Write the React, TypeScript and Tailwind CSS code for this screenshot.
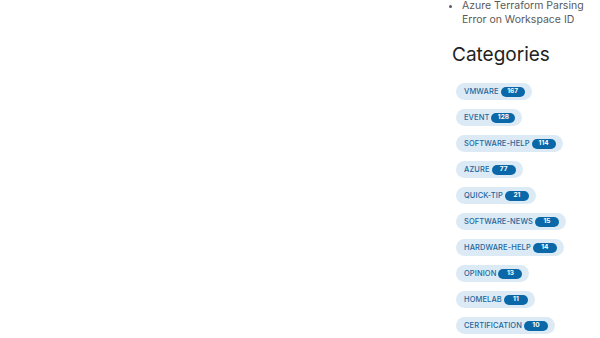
import React from "react";

const cats: [string, number][] = [
  ["VMWARE", 167],
  ["EVENT", 128],
  ["SOFTWARE-HELP", 114],
  ["AZURE", 77],
  ["QUICK-TIP", 21],
  ["SOFTWARE-NEWS", 15],
  ["HARDWARE-HELP", 14],
  ["OPINION", 13],
  ["HOMELAB", 11],
  ["CERTIFICATION", 10],
];

export default function App() {
  return (
    <div
      className="w-[600px] h-[338px] overflow-hidden bg-white flex"
      style={{ fontFamily: "Inter, 'Noto Sans', sans-serif" }}
    >
      <div className="w-[452px] shrink-0" />
      <div className="flex flex-col w-[148px]">
        <ul className="mt-[-1px] text-[10.5px] leading-[14px] text-[#5a5a5a] list-disc pl-[10px]">
          <li className="pl-0">Azure Terraform Parsing Error on Workspace ID</li>
        </ul>
        <h2 className="mt-[16px] text-[19px] leading-[24px] text-[#222] font-normal">Categories</h2>
        <div className="mt-[16px] flex flex-col items-start gap-[9px] pl-[4px]">
          {cats.map(([name, n]) => (
            <div
              key={name}
              className="h-[17px] flex items-center rounded-full bg-[#dceaf6] pl-[8px] pr-[7px]"
            >
              <span className="text-[7.5px] font-medium text-[#23679c] tracking-[0.1px]">{name}</span>
              <span className="ml-[2px] h-[10px] min-w-[24px] px-[5px] rounded-full bg-[#0a68a8] text-white text-[6.5px] font-bold flex items-center justify-center">
                {n}
              </span>
            </div>
          ))}
        </div>
      </div>
    </div>
  );
}
